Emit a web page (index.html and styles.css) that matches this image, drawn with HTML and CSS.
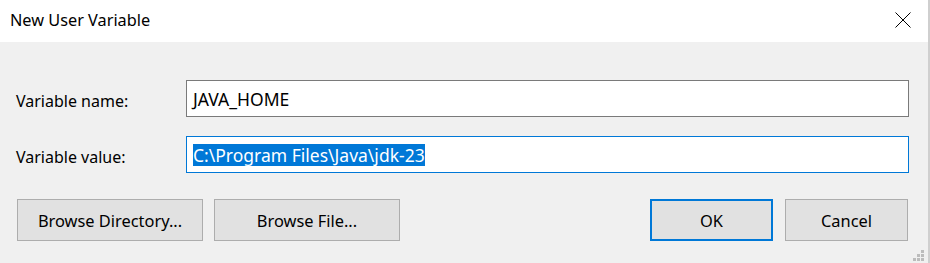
FILE: index.html
```html
<!DOCTYPE html>
<html lang="en">
<head>
    <meta charset="UTF-8">
    <title>New User Variable</title>
    <link rel="stylesheet" href="styles.css">
</head>
<body>

    <div class="dialog">
        <div class="titlebar">
            <span class="title">New User Variable</span>
            <span class="close">
                <svg width="16" height="16" viewBox="0 0 16 16">
                    <path d="M0.5 0.5 L15.5 15.5 M15.5 0.5 L0.5 15.5" stroke="#000" stroke-width="1" fill="none"/>
                </svg>
            </span>
        </div>

        <div class="content">
            <div class="row">
                <label class="label">Variable name:</label>
                <div class="field">JAVA_HOME</div>
            </div>
            <div class="row">
                <label class="label">Variable value:</label>
                <div class="field focused"><span class="selected">C:\Program Files\Java\jdk-23</span></div>
            </div>

            <div class="buttons">
                <div class="btn-group">
                    <button class="btn wide">Browse Directory...</button>
                    <button class="btn wide">Browse File...</button>
                </div>
                <div class="btn-group right">
                    <button class="btn default">OK</button>
                    <button class="btn">Cancel</button>
                </div>
            </div>
        </div>

        <!-- size grip -->
        <svg class="grip" width="12" height="12" viewBox="0 0 12 12">
            <rect x="8" y="0" width="3" height="3" fill="#bcbcbc"/>
            <rect x="4" y="4" width="3" height="3" fill="#bcbcbc"/>
            <rect x="8" y="4" width="3" height="3" fill="#bcbcbc"/>
            <rect x="0" y="8" width="3" height="3" fill="#bcbcbc"/>
            <rect x="4" y="8" width="3" height="3" fill="#bcbcbc"/>
            <rect x="8" y="8" width="3" height="3" fill="#bcbcbc"/>
        </svg>
    </div>

</body>
</html>
```

FILE: styles.css
```css
body {
    margin: 0;
    font-family: "Noto Sans", "Open Sans", sans-serif;
    font-size: 16px;
    color: #000;
    background: #f0f0f0;
}
.dialog {
    position: relative;
    width: 928px;
    height: 263px;
    background: #f0f0f0;
    border-right: 2px solid #cfcfcf;
}
.titlebar {
    height: 42px;
    background: #fff;
    display: flex;
    align-items: center;
    justify-content: space-between;
}
.title {
    padding-left: 10px;
    font-size: 16.3px;
    padding-bottom: 3px;
}
.close {
    display: flex;
    margin-right: 17px;
    margin-bottom: 2px;
}
.content {
    padding: 38px 19px 0 16px;
}
.row {
    display: flex;
    align-items: center;
    height: 37px;
    margin-bottom: 19px;
}
.label {
    width: 170px;
    font-size: 16px;
    padding-top: 4px;
}
.field {
    flex: 1;
    box-sizing: border-box;
    height: 37px;
    border: 1px solid #7a7a7a;
    background: #fff;
    font-size: 17.5px;
    padding: 0 0 0 6px;
    display: flex;
    align-items: center;
}
.field.focused {
    border-color: #0078d7;
}
.selected {
    background: #0078d7;
    color: #fff;
    line-height: 22px;
}
.buttons {
    display: flex;
    justify-content: space-between;
    margin-top: 26px;
    padding-left: 1px;
    padding-right: 1px;
}
.btn-group {
    display: flex;
    gap: 11px;
}
.btn-group.right {
    gap: 12px;
}
.btn {
    width: 123px;
    height: 42px;
    font-family: inherit;
    font-size: 16.4px;
    color: #000;
    background: #e1e1e1;
    border: 1px solid #adadad;
    padding: 0;
}
.btn.wide {
    width: 186px;
}
.btn.default {
    border: 2px solid #0078d7;
}
.grip {
    position: absolute;
    right: 3px;
    bottom: 1px;
}
```
